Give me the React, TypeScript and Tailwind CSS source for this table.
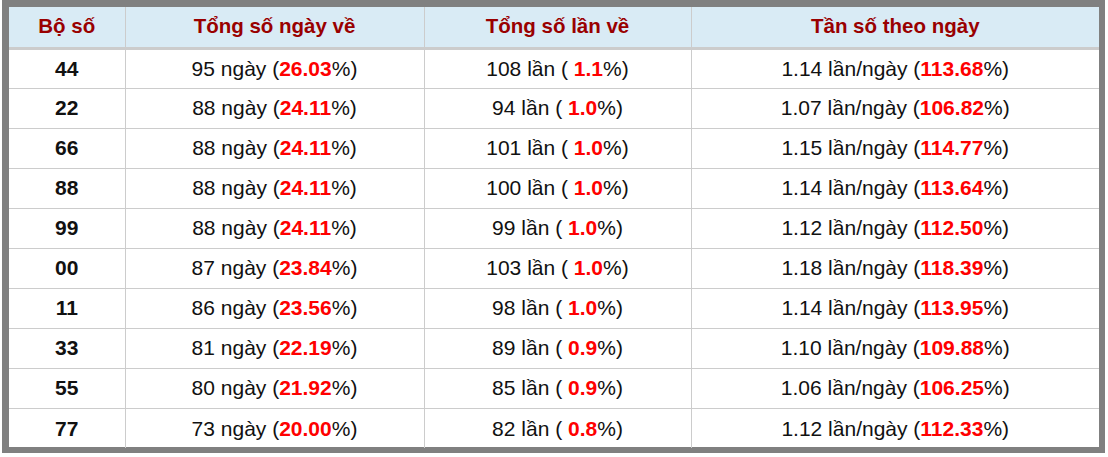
const rows = [
  { bo: "44", ngay: "95", pn: "26.03", lan: "108", pl: "1.1", tan: "1.14", pt: "113.68" },
  { bo: "22", ngay: "88", pn: "24.11", lan: "94", pl: "1.0", tan: "1.07", pt: "106.82" },
  { bo: "66", ngay: "88", pn: "24.11", lan: "101", pl: "1.0", tan: "1.15", pt: "114.77" },
  { bo: "88", ngay: "88", pn: "24.11", lan: "100", pl: "1.0", tan: "1.14", pt: "113.64" },
  { bo: "99", ngay: "88", pn: "24.11", lan: "99", pl: "1.0", tan: "1.12", pt: "112.50" },
  { bo: "00", ngay: "87", pn: "23.84", lan: "103", pl: "1.0", tan: "1.18", pt: "118.39" },
  { bo: "11", ngay: "86", pn: "23.56", lan: "98", pl: "1.0", tan: "1.14", pt: "113.95" },
  { bo: "33", ngay: "81", pn: "22.19", lan: "89", pl: "0.9", tan: "1.10", pt: "109.88" },
  { bo: "55", ngay: "80", pn: "21.92", lan: "85", pl: "0.9", tan: "1.06", pt: "106.25" },
  { bo: "77", ngay: "73", pn: "20.00", lan: "82", pl: "0.8", tan: "1.12", pt: "112.33" },
];

export default function App() {
  return (
    <div className="w-[1108px] h-[457px] bg-white font-['Liberation_Sans',Arial,sans-serif]">
      <div className="ml-[2px] w-[1103px] h-[453px] border-t-[7px] border-l-[7px] border-r-[6px] border-b-[6px] border-[#808080] bg-white">
        <table className="w-full border-collapse text-[21px] text-[#111]">
          <thead>
            <tr className="h-[41px] bg-[#d9ebf5] text-[#990000] text-[20.5px] font-bold border-b-[3px] border-[#cccccc]">
              <th className="w-[116px] border-r border-[#cccccc] font-bold">Bộ số</th>
              <th className="w-[299px] border-r border-[#cccccc] font-bold">Tổng số ngày về</th>
              <th className="w-[267px] border-r border-[#cccccc] font-bold">Tổng số lần về</th>
              <th className="font-bold">Tần số theo ngày</th>
            </tr>
          </thead>
          <tbody>
            {rows.map((r, i) => (
              <tr key={r.bo} className={`h-[40px] ${i < rows.length - 1 ? "border-b border-[#cccccc]" : ""}`}>
                <td className="text-center font-bold border-r border-[#cccccc]">{r.bo}</td>
                <td className="text-center border-r border-[#cccccc]">
                  {r.ngay} ngày (<span className="font-bold text-[#ff0000]">{r.pn}</span>%)
                </td>
                <td className="text-center border-r border-[#cccccc]">
                  {r.lan} lần ( <span className="font-bold text-[#ff0000]">{r.pl}</span>%)
                </td>
                <td className="text-center">
                  {r.tan} lần/ngày (<span className="font-bold text-[#ff0000]">{r.pt}</span>%)
                </td>
              </tr>
            ))}
          </tbody>
        </table>
      </div>
    </div>
  );
}
